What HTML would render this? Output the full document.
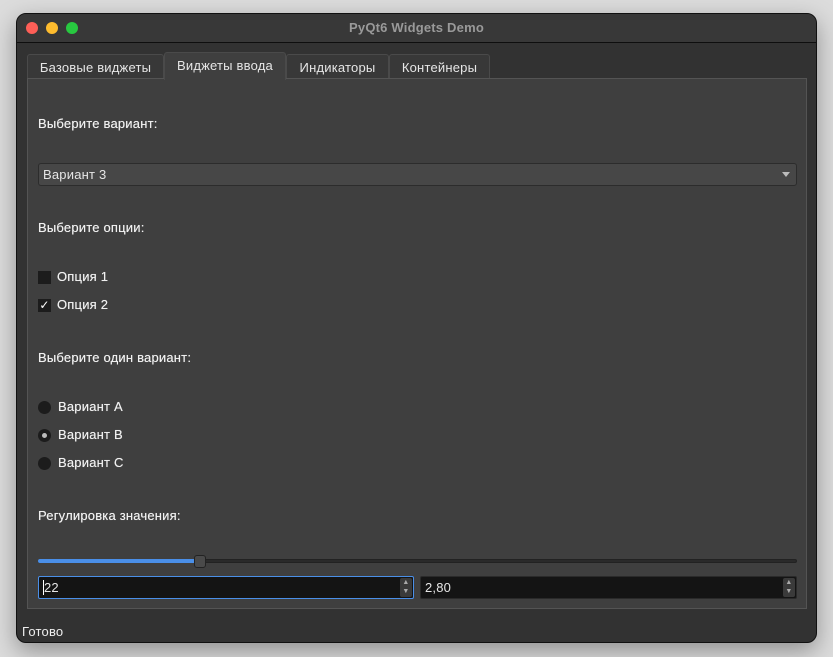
<!DOCTYPE html>
<html><head><meta charset="utf-8"><style>
*{box-sizing:border-box;margin:0;padding:0}
body{width:833px;height:657px;background:#dcdcdc;font-family:"Liberation Sans","DejaVu Sans",sans-serif;font-size:13px;color:#e6e6e6;position:relative;overflow:hidden;letter-spacing:0.2px}
.win{position:absolute;left:16px;top:13px;width:801px;height:630px;background:#323232;border:1px solid #111;border-radius:10px;overflow:hidden;box-shadow:0 8px 24px rgba(0,0,0,.35)}
.title{position:absolute;left:0;top:0;width:100%;height:29px;background:#383838;border-bottom:1px solid #0e0e0e;text-align:center;line-height:28px;font-weight:bold;color:#9a9a9a;font-size:13px}
.dot{position:absolute;top:8px;width:12px;height:12px;border-radius:50%}
.a{position:absolute}
.tab{position:absolute;top:40px;height:26px;background:#383838;border:1px solid #4a4a4a;border-bottom:none;border-radius:3px 3px 0 0;line-height:25px;text-align:center;color:#e6e6e6}
.panel{position:absolute;left:10px;top:64px;width:780px;height:531px;background:#3f3f3f;border:1px solid #545454}
.lbl{position:absolute;left:10px;font-size:13px;color:#f0f0f0;text-shadow:0 0 0.4px #f0f0f0}
.cb{position:absolute;left:10px;width:13px;height:13px;background:#1c1c1c}
.rb{position:absolute;left:10px;width:13px;height:13px;border-radius:50%;background:#1c1c1c}
.spin{position:absolute;top:497px;height:23px;background:#141414;border:1px solid #2a2a2a;border-radius:2px;padding-left:4px;line-height:21px;font-size:13px}
.arr{position:absolute;right:1px;top:1px;width:12px;height:19px;background:#3a3a3a;border-radius:2px}
</style></head><body>
<div class="win">
 <div class="title">PyQt6 Widgets Demo
  <div class="dot" style="left:9px;background:#fe5f57"></div>
  <div class="dot" style="left:29px;background:#febc2e"></div>
  <div class="dot" style="left:49px;background:#28c840"></div>
 </div>
 <div class="tab" style="left:10px;width:137px">Базовые виджеты</div>
 <div class="tab" style="left:147px;width:122px;top:38px;height:28px;background:#3f3f3f;z-index:2">Виджеты ввода</div>
 <div class="tab" style="left:269px;width:103px">Индикаторы</div>
 <div class="tab" style="left:372px;width:101px">Контейнеры</div>
 <div class="panel">
  <div class="lbl" style="top:37px">Выберите вариант:</div>
  <div class="a" style="left:10px;top:84px;width:759px;height:23px;background:#474747;border:1px solid #2c2c2c;border-radius:3px;line-height:21px;padding-left:4px">Вариант 3
   <div class="a" style="right:6px;top:8px;width:0;height:0;border-left:4px solid transparent;border-right:4px solid transparent;border-top:5px solid #bbb"></div></div>
  <div class="lbl" style="top:141px">Выберите опции:</div>
  <div class="cb" style="top:192px"></div><div class="lbl" style="left:29px;top:190px">Опция 1</div>
  <div class="cb" style="top:220px;color:#fff;font-size:12px;line-height:13px;text-align:center">✓</div><div class="lbl" style="left:29px;top:218px">Опция 2</div>
  <div class="lbl" style="top:271px">Выберите один вариант:</div>
  <div class="rb" style="top:322px"></div><div class="lbl" style="left:30px;top:320px">Вариант A</div>
  <div class="rb" style="top:350px"><div class="a" style="left:4px;top:4px;width:5px;height:5px;border-radius:50%;background:#bbb"></div></div><div class="lbl" style="left:30px;top:348px">Вариант B</div>
  <div class="rb" style="top:378px"></div><div class="lbl" style="left:30px;top:376px">Вариант C</div>
  <div class="lbl" style="top:429px">Регулировка значения:</div>
  <div class="a" style="left:10px;top:480px;width:759px;height:4px;background:#2a2a2a;border-radius:2px;border:1px solid #222"></div>
  <div class="a" style="left:10px;top:480px;width:160px;height:4px;background:#4a8fe8;border-radius:2px"></div>
  <div class="a" style="left:166px;top:476px;width:12px;height:13px;background:#4a4a4a;border:1px solid #222;border-radius:3px"></div>
  <div class="spin" style="left:10px;width:376px;border:1px solid #4a8fe8"><span style="border-left:1px solid #fff">22</span><div class="arr" style="color:#aaa;font-size:7px;line-height:9px;text-align:center">▲<br>▼</div></div>
  <div class="spin" style="left:392px;width:377px">2,80<div class="arr" style="color:#aaa;font-size:7px;line-height:9px;text-align:center">▲<br>▼</div></div>
 </div>
 <div class="a" style="left:5px;top:610px;font-size:13px;color:#eee">Готово</div>
</div>
</body></html>
